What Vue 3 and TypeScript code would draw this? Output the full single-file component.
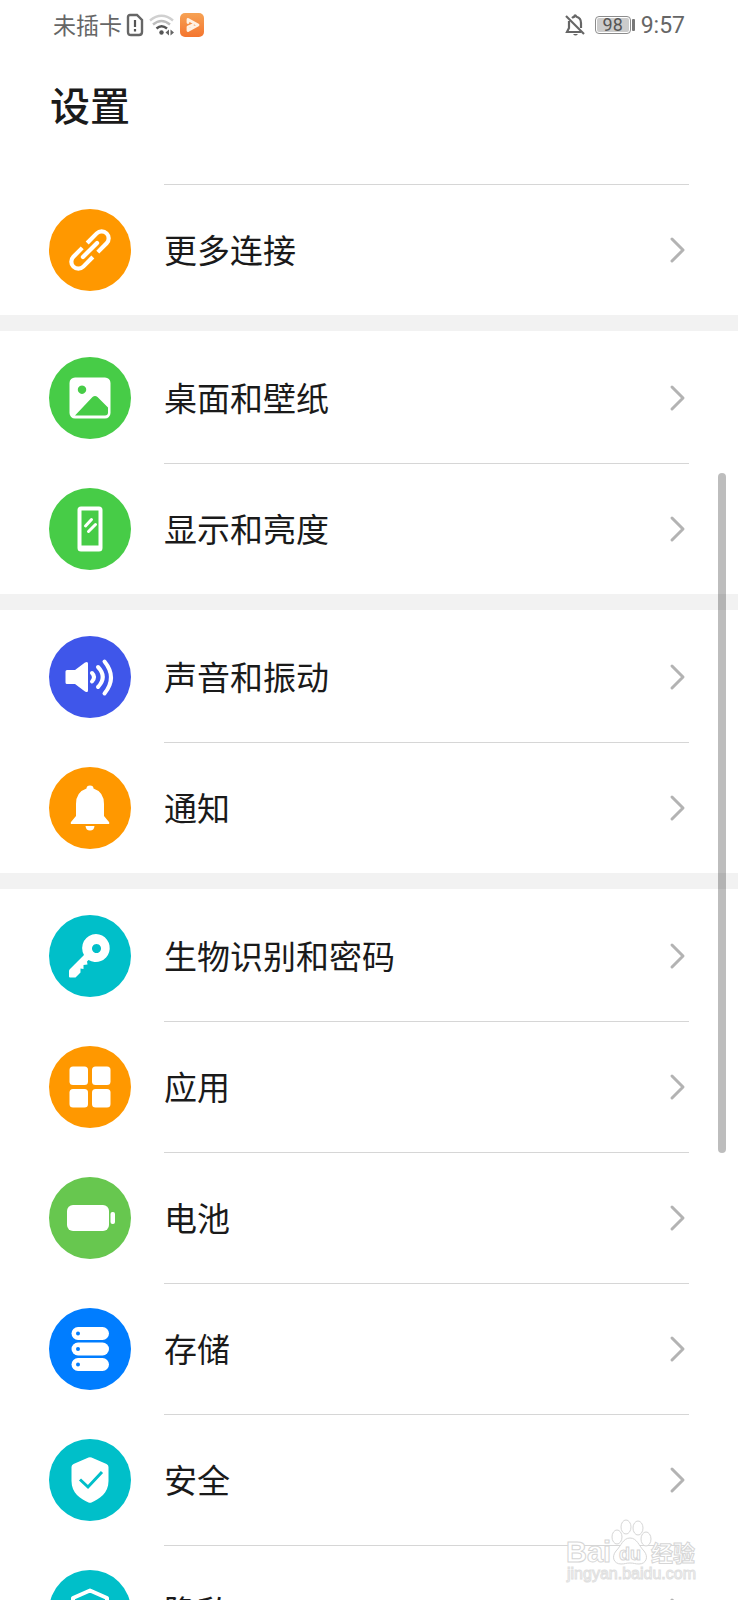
<script setup lang="ts">
type IconName =
  | 'link' | 'image' | 'phone' | 'sound' | 'bell' | 'key'
  | 'apps' | 'battery' | 'storage' | 'security' | 'privacy'

interface Item {
  icon: IconName
  label: string
  tone: string
}

const groups: Item[][] = [
  [{ icon: 'link', label: '更多连接', tone: 'orange' }],
  [
    { icon: 'image', label: '桌面和壁纸', tone: 'green' },
    { icon: 'phone', label: '显示和亮度', tone: 'green' },
  ],
  [
    { icon: 'sound', label: '声音和振动', tone: 'indigo' },
    { icon: 'bell', label: '通知', tone: 'orange' },
  ],
  [
    { icon: 'key', label: '生物识别和密码', tone: 'teal' },
    { icon: 'apps', label: '应用', tone: 'orange' },
    { icon: 'battery', label: '电池', tone: 'lime' },
    { icon: 'storage', label: '存储', tone: 'blue' },
    { icon: 'security', label: '安全', tone: 'teal' },
    { icon: 'privacy', label: '隐私', tone: 'teal' },
  ],
]
</script>

<template>
  <div class="screen">
    <header class="status">
      <div class="status-side">
        <span class="carrier">未插卡</span>
        <svg class="sim" viewBox="0 0 18 24" width="18" height="24" aria-hidden="true">
          <path d="M4 2h7l5 5v12q0 3-3 3H5q-3 0-3-3V4q0-2 2-2z" fill="none" stroke="#666" stroke-width="2.400" />
          <path d="M9 7v7M9 16v2.500" stroke="#555" stroke-width="2.200" />
        </svg>
        <svg class="wifi" viewBox="0 0 26 24" width="26" height="24" aria-hidden="true">
          <g fill="none" stroke-width="2.400">
            <path d="M1 7.500q11.500-9.500 23 0" stroke="#d0d0d0" />
            <path d="M4 11.500q8.500-7 17 0" stroke="#bdbdbd" />
            <path d="M7.500 15.500q5-4.500 10.500 0" stroke="#555" />
          </g>
          <circle cx="12.500" cy="19.500" r="2.200" fill="#555" />
          <path d="M20 16.500v6l-3.500-3zM21.500 16.500v6l3.500-3z" fill="#666" />
        </svg>
        <svg class="player" viewBox="0 0 24 24" width="24" height="24" aria-hidden="true">
          <defs>
            <linearGradient id="player-fill" x1="0" y1="0" x2="0" y2="1">
              <stop offset="0" stop-color="#f6a254" />
              <stop offset="1" stop-color="#f4752f" />
            </linearGradient>
          </defs>
          <rect width="24" height="24" rx="5" fill="url(#player-fill)" />
          <path d="M8 9.500V6.500L18 12 8 17.500V14l4.500-2" fill="none" stroke="#fff2e4" stroke-width="2.800" stroke-linecap="round" stroke-linejoin="round" />
        </svg>
      </div>
      <div class="status-side">
        <svg class="mute" viewBox="0 0 20 24" width="20" height="24" aria-hidden="true">
          <g fill="none" stroke="#666" stroke-width="2.200">
            <path d="M7 5q1-1 2-1.200Q10 1 11.500 3.800 16 5 16 10v5" />
            <path d="M4 8v7l-2 4h14" />
            <path d="M1 3l18 18" />
          </g>
          <path d="M8 21h5q-2.500 3-5 0z" fill="#666" />
        </svg>
        <span class="charge"><span class="charge-level">98</span></span>
        <span class="charge-tip"></span>
        <time class="clock">9:57</time>
      </div>
    </header>

    <h1 class="title">设置</h1>

    <main class="list">
      <section v-for="(group, g) in groups" :key="g" class="group">
        <a v-for="item in group" :key="item.label" href="#" class="row">
          <span class="badge" :class="item.tone">
            <svg viewBox="0 0 82 82" width="82" height="82" aria-hidden="true" fill="#fff">
              <g v-if="item.icon === 'link'" transform="translate(41 41) rotate(-45)" fill="none" stroke="#fff" stroke-width="4.200">
                <path d="M3-7H16.500a7 7 0 0 1 0 14H4" />
                <path d="M-3 7H-16.500a7 7 0 0 1 0-14H-4" />
                <path d="M-10 0H10" stroke-linecap="round" />
              </g>
              <g v-else-if="item.icon === 'image'">
                <path fill-rule="evenodd" d="M26 20.500h30a5.500 5.500 0 0 1 5.500 5.500v30a5.500 5.500 0 0 1-5.500 5.500H26a5.500 5.500 0 0 1-5.500-5.500V26a5.500 5.500 0 0 1 5.500-5.500zM33 28.500a4.200 4.200 0 1 0 .01 0zM26 58.500h30q3 0 3-3v-5L48.500 40Q46 38 43.500 40z" />
              </g>
              <g v-else-if="item.icon === 'phone'">
                <path fill-rule="evenodd" d="M32 18.500h18q3.500 0 3.500 3.500v38q0 3.500-3.500 3.500H32q-3.500 0-3.500-3.500V22q0-3.500 3.500-3.500zM32.500 22.500v35h17v-35z" />
                <path d="M36.500 38l6-6.500M39.500 43.500l7-7" stroke="#fff" stroke-width="3" stroke-linecap="round" />
              </g>
              <g v-else-if="item.icon === 'sound'">
                <path d="M18 34h8L36 26.500q3-1.500 3 1v27q0 2.500-3 1L26 48h-8q-1.500 0-1.500-1.500v-11q0-1.500 1.500-1.500z" />
                <g fill="none" stroke="#fff" stroke-width="4" stroke-linecap="round">
                  <path d="M43 37q4 4 0 8.500" />
                  <path d="M49 31q9.500 10 0 20" />
                  <path d="M55.500 25.500q13 16 0 32" />
                </g>
              </g>
              <g v-else-if="item.icon === 'bell'">
                <path d="M37.500 21.500q0-3 3.500-3t3.500 3Q55 25 55 37v12l5 6q1 2-1 2H23q-2 0-1-2l5-6V37q0-12 10.500-15.500z" />
                <path d="M36.500 59h9q-.500 4.500-4.500 4.500t-4.500-4.500z" />
              </g>
              <g v-else-if="item.icon === 'key'">
                <path fill-rule="evenodd" d="M47 19a14 14 0 1 1-7.500 26l-1.500 1.500.5 3-4 .5v4l-3-.5 0 4-5 5H21q-1 0-1-1v-5.500q0-1 1-2L35 40A14 14 0 0 1 47 19zM47.500 29a4.500 4.500 0 1 0 .01 0z" />
              </g>
              <g v-else-if="item.icon === 'apps'">
                <rect x="20.500" y="20.500" width="18.500" height="18.500" rx="3.500" />
                <rect x="43" y="20.500" width="18.500" height="18.500" rx="3.500" />
                <rect x="20.500" y="43" width="18.500" height="18.500" rx="3.500" />
                <rect x="43" y="43" width="18.500" height="18.500" rx="3.500" />
              </g>
              <g v-else-if="item.icon === 'battery'">
                <rect x="18" y="28" width="42" height="26" rx="6" />
                <rect x="61.500" y="35" width="4.500" height="12" rx="2" />
              </g>
              <g v-else-if="item.icon === 'storage'">
                <rect x="22.500" y="19" width="37.500" height="13" rx="6.500" />
                <rect x="22.500" y="34.500" width="37.500" height="13" rx="6.500" />
                <rect x="22.500" y="50" width="37.500" height="13" rx="6.500" />
                <g fill="#007dff">
                  <circle cx="29" cy="25.500" r="2" />
                  <circle cx="29" cy="41" r="2" />
                  <circle cx="29" cy="56.500" r="2" />
                </g>
              </g>
              <g v-else-if="item.icon === 'security'">
                <path d="M39.500 18.500q1.500-.700 3 0l15 6.500q2 1 2 3v14c0 12-9 18-17 21.500q-1.500.700-3 0c-8-3.500-17-9.500-17-21.500V28q0-2 2-3z" />
                <path d="M31 40.500l8 7.500 14-15" fill="none" stroke="#00bfc9" stroke-width="3" />
              </g>
              <g v-else>
                <path d="M41 20.500L58 28v14c0 10-8 16-17 20-9-4-17-10-17-20V28z" fill="none" stroke="#fff" stroke-width="4" stroke-linejoin="round" />
              </g>
            </svg>
          </span>
          <span class="cell">
            <span class="label">{{ item.label }}</span>
            <svg class="chevron" viewBox="0 0 18 28" width="18" height="28" aria-hidden="true">
              <path d="M3 3l11 11L3 25" fill="none" stroke="#b3b3b3" stroke-width="3" stroke-linecap="round" stroke-linejoin="round" />
            </svg>
          </span>
        </a>
      </section>
    </main>

    <div class="scroll-thumb"></div>

    <svg class="watermark" viewBox="0 0 140 70" width="140" height="70">
      <g fill="#fff" stroke="#d6d6d6" stroke-width="1">
        <text class="brand" x="4" y="45">Bai</text>
        <path d="M68 21c7 0 9 8 14 13 5 6 2 13-5 13-4 0-5-1-9-1s-5 1-9 1c-7 0-10-7-5-13 5-5 7-13 14-13z" />
        <ellipse cx="55" cy="20" rx="5" ry="7" />
        <ellipse cx="64" cy="10" rx="5" ry="7" />
        <ellipse cx="76" cy="11" rx="5" ry="7" />
        <ellipse cx="84" cy="22" rx="5" ry="7" />
        <text class="paw" x="57" y="43">du</text>
        <text class="name" x="89" y="44">经验</text>
      </g>
      <text class="site" x="5" y="62">jingyan.baidu.com</text>
    </svg>
  </div>
</template>

<style>
body {
  margin: 0;
  background: #fff;
}
</style>

<style scoped>
.screen {
  position: relative;
  display: flex;
  flex-direction: column;
  box-sizing: border-box;
  height: 100vh;
  overflow: hidden;
  background: #fff;
  color: #1a1a1a;
  font-family: "Noto Sans CJK SC", sans-serif;
}

.status {
  flex: none;
  display: flex;
  align-items: center;
  justify-content: space-between;
  height: 50px;
  padding: 0 53px;
  color: #666;
}

.status-side {
  display: flex;
  align-items: center;
}

.carrier {
  padding-bottom: 2px;
  font-size: 23px;
  font-weight: 400;
  line-height: 32px;
}

.sim {
  margin-left: 4px;
}

.wifi {
  margin-left: 5px;
}

.player {
  margin-left: 5px;
}

.charge {
  display: flex;
  margin-left: 10px;
  padding: 1px;
  border: 1px solid #8c8c8c;
  border-radius: 4px;
}

.charge-level {
  width: 32px;
  border-radius: 2px;
  background: #ccc;
  color: #555;
  font-family: Roboto, sans-serif;
  font-size: 18px;
  line-height: 14px;
  text-align: center;
}

.charge-tip {
  width: 3px;
  height: 12px;
  margin-left: 1px;
  border-radius: 1px;
  background: #777;
}

.clock {
  margin-left: 6px;
  padding-top: 2px;
  font-family: Roboto, sans-serif;
  font-size: 23px;
  line-height: 32px;
}

.title {
  flex: none;
  margin: 0;
  padding: 24px 50px 50px;
  font-size: 40px;
  font-weight: 500;
  line-height: 60px;
}

.list {
  flex: none;
}

.group + .group {
  padding-top: 1px;
  border-top: 16px solid #f2f2f2;
}

.row {
  display: flex;
  align-items: center;
  height: 131px;
  padding: 0 49px;
  color: inherit;
  text-decoration: none;
}

.badge {
  flex: none;
  width: 82px;
  height: 82px;
  border-radius: 50%;
}

.badge svg {
  display: block;
}

.orange {
  background: #ff9800;
}

.green {
  background: #47cc47;
}

.indigo {
  background: #3f56ea;
}

.teal {
  background: #00bfc9;
}

.lime {
  background: #67c74f;
}

.blue {
  background: #007dff;
}

.cell {
  flex: 1;
  display: flex;
  align-items: center;
  justify-content: space-between;
  box-sizing: border-box;
  height: 100%;
  margin-left: 33px;
  padding-right: 2px;
  border-top: 1px solid transparent;
}

.row + .row .cell,
.group:first-child .cell {
  border-top-color: #d6d6d6;
}

.label {
  padding-bottom: 3px;
  font-size: 33px;
  line-height: 48px;
}

.scroll-thumb {
  position: absolute;
  top: 473px;
  right: 12px;
  width: 8px;
  height: 680px;
  border-radius: 4px;
  background: rgba(0, 0, 0, 0.26);
}

.watermark {
  position: absolute;
  right: 36px;
  bottom: 13px;
}

.brand {
  font: bold 29px "Liberation Sans", sans-serif;
}

.paw {
  font: bold 18px "Liberation Sans", sans-serif;
}

.name {
  font: bold 22px "Noto Sans CJK SC", sans-serif;
}

.site {
  fill: #fff;
  stroke: #e0e0e0;
  stroke-width: 1px;
  font: 16px "Liberation Sans", sans-serif;
}
</style>
